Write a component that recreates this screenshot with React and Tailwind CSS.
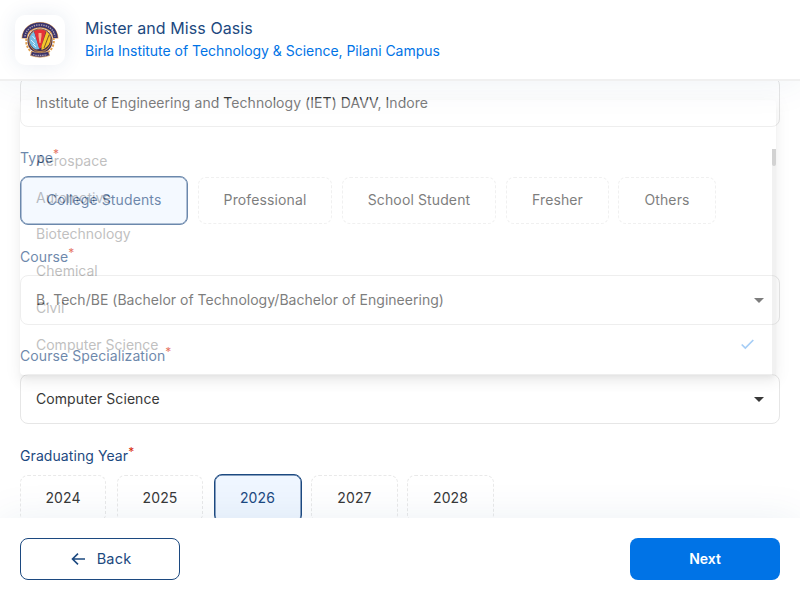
const types = [
  { label: "College Students", box: "w-[168px]", selected: true },
  { label: "Professional", box: "w-[134px]" },
  { label: "School Student", box: "w-[154px]" },
  { label: "Fresher", box: "w-[103px]" },
  { label: "Others", box: "w-[98px] -ml-px" },
];

const years = [
  { label: "2024", box: "w-[86px]" },
  { label: "2025", box: "w-[86px]" },
  { label: "2026", box: "w-[88px] -ml-[0.5px]", selected: true },
  { label: "2027", box: "w-[87px] -ml-[1.5px]" },
  { label: "2028", box: "w-[87px] -ml-[2px]" },
];

const specializations = [
  "Aerospace",
  "Automotive",
  "Biotechnology",
  "Chemical",
  "Civil",
  "Computer Science",
];

function Crest() {
  return (
    <svg width="38" height="38" viewBox="0 0 38 38">
      <circle cx="19" cy="20" r="13.800" fill="none" stroke="#e2a04c" strokeWidth="2" strokeDasharray="2.300 1.300" />
      <circle cx="19" cy="20" r="12.500" fill="#4a3050" />
      <path d="M3.500 17.500 C4 -.5 34 -.5 34.500 17.500" fill="none" stroke="#e0a25c" strokeWidth="5.800" />
      <path d="M3.500 17 C4 -.5 34 -.5 34.500 17" fill="none" stroke="#39326b" strokeWidth="4.600" />
      <path d="M4 15.500 C6 0 32 0 34 15.500" fill="none" stroke="#a99cae" strokeWidth="1.500" strokeDasharray="1.400 1" />
      <circle cx="19" cy="19.500" r="11.200" fill="#4a3050" stroke="#dca04a" strokeWidth=".8" />
      <path d="M13 10.500 C6 15 7 25 15 28.500 L18.500 28 Z" fill="#76bfe5" />
      <path d="M13 10 Q19 7 25 10 L20 27 L18 27 Z" fill="#e63137" />
      <path d="M25.500 10.500 C32 16 30 26 20.500 29 L20.500 25 Z" fill="#f5c62c" />
      <path d="M28 14 L23 27" stroke="#7c5a26" strokeWidth="1" />
      <path d="M11.500 15 l2.500 3 M10 19 l4 4 M12 23 l3 3" stroke="#d8efff" strokeWidth="1" />
      <path d="M17.500 12 H20.500 V15 L19.500 22 L18.500 22 L17.500 15 Z" fill="#f5b08a" />
      <path d="M10.500 30.500 Q19 33 27.500 30.500 L28.500 34.500 Q19 37.800 9.500 34.500 Z" fill="#39326b" stroke="#e0a25c" strokeWidth=".7" />
      <path d="M12 33.500 Q19 35.500 26 33.500" fill="none" stroke="#a99cae" strokeWidth="1.300" strokeDasharray="1.500 .8" />
    </svg>
  );
}

function Label({ children }) {
  return (
    <div className="flex h-[18px] items-center text-[14px] leading-[18px] tracking-[0.08px] whitespace-nowrap text-[#1c4980]">
      {children}
      <span className="-mt-[9px] text-[12px] leading-none tracking-normal text-[#d92c0d]">*</span>
    </div>
  );
}

function Chips({ items, gap, pad }) {
  return (
    <div className={`flex items-center ${gap}`}>
      {items.map((c) => (
        <div
          key={c.label}
          className={`flex shrink-0 items-center justify-center rounded-lg text-[14px] tracking-[0.12px] whitespace-nowrap ${pad} ${c.box} ${
            c.selected
              ? "h-[49px] border border-[#1c4980] bg-[#eff6ff] text-[#1c4980] shadow-[inset_0_0_0_0.5px_#1c4980]"
              : "h-[47px] border border-dashed border-[#e9e9e9] bg-white text-[#383838]"
          }`}
        >
          {c.label}
        </div>
      ))}
    </div>
  );
}

function Field({ children, arrow, spacing = "tracking-[0.08px]" }) {
  return (
    <div className="flex h-[50px] items-center justify-between rounded-lg border border-[#e6e6e6] bg-white px-[15px] text-[14px] text-[#383838]">
      <span className={`pb-px ${spacing}`}>{children}</span>
      {arrow && (
        <svg width="10" height="5" viewBox="0 0 10 5">
          <path d="M0 0 H10 L5 5 Z" fill="#383838" />
        </svg>
      )}
    </div>
  );
}

export default function App() {
  return (
    <div className="flex h-[600px] w-[800px] flex-col overflow-hidden bg-white font-['Inter',sans-serif]">
      <header className="z-20 flex h-[81px] shrink-0 items-center border-b-2 border-[#f0f0f0] bg-white pl-[15px] shadow-[0_0_40px_rgba(28,73,128,0.08)]">
        <div className="flex size-[50px] items-center justify-center rounded-[10px] bg-white shadow-[0_0_20px_rgba(28,73,128,0.10)]">
          <Crest />
        </div>
        <div className="ml-5">
          <div className="text-[16px] leading-[22px] tracking-[0.08px] text-[#1c4980]">Mister and Miss Oasis</div>
          <div className="mt-px text-[14px] leading-[22px] tracking-[-0.03px] text-[#0073e6]">
            Birla Institute of Technology &amp; Science, Pilani Campus
          </div>
        </div>
      </header>

      <main className="relative h-[437px] shrink-0 overflow-hidden px-5">
        <div className="-mt-[4px]">
          <Field spacing="tracking-[0.05px] pt-px">Institute of Engineering and Technology (IET) DAVV, Indore</Field>
        </div>
        <div className="mt-[22px]"><Label>Type</Label></div>
        <div className="mt-[9px]"><Chips items={types} gap="gap-[10px]" pad="pb-[2px]" /></div>
        <div className="mt-[23px]"><Label>Course</Label></div>
        <div className="mt-[9px]">
          <Field arrow spacing="tracking-[0.02px]">B. Tech/BE (Bachelor of Technology/Bachelor of Engineering)</Field>
        </div>
        <div className="mt-[22px]"><Label>Course Specialization</Label></div>
        <div className="mt-[9px]"><Field arrow>Computer Science</Field></div>
        <div className="mt-[23px]"><Label>Graduating Year</Label></div>
        <div className="mt-[9px]"><Chips items={years} gap="gap-[11px]" pad="pb-[3px]" /></div>

        <div className="absolute top-[19px] left-5 flex h-[275px] w-[756px] rounded bg-white opacity-35 shadow-[0px_5px_5px_-3px_rgba(0,0,0,0.2),0px_8px_10px_1px_rgba(0,0,0,0.10),0px_3px_14px_2px_rgba(0,0,0,0.08)]">
          <ul className="flex-1 pt-[42px] pl-4 text-[14px] text-[#4c4c4c]">
            {specializations.map((s) => (
              <li key={s} className="flex h-[36.8px] items-center justify-between pr-[18px]">
                {s}
                {s === "Computer Science" && (
                  <svg width="13" height="11" viewBox="0 0 13 11" fill="none">
                    <path d="M.7 5.500 L4.300 9 L12.300 1" stroke="#0073e6" strokeWidth="1.700" />
                  </svg>
                )}
              </li>
            ))}
          </ul>
          <div className="mt-[49px] w-1 bg-[#d9d9d9]">
            <div className="h-[17px] rounded-b-sm bg-[#808080]" />
          </div>
        </div>
      </main>

      <footer className="z-20 flex h-[82px] shrink-0 items-start justify-between bg-white px-5 pt-5 shadow-[0_0_40px_rgba(28,73,128,0.08)]">
        <button className="flex h-[42px] w-[160px] items-center justify-center gap-[12px] rounded-lg border border-[#1c4980] pl-[2px] text-[14.500px] tracking-[0.2px] text-[#1c4980]">
          <svg width="14" height="12" viewBox="0 0 14 12" fill="none" stroke="#1c4980" strokeWidth="1.600">
            <path d="M14 6 H1.500 M7 .7 L1.500 6 L7 11.300" />
          </svg>
          Back
        </button>
        <button className="h-[42px] w-[150px] rounded-lg bg-[#0073e6] pb-[2px] text-[14px] font-semibold text-white">Next</button>
      </footer>
    </div>
  );
}
